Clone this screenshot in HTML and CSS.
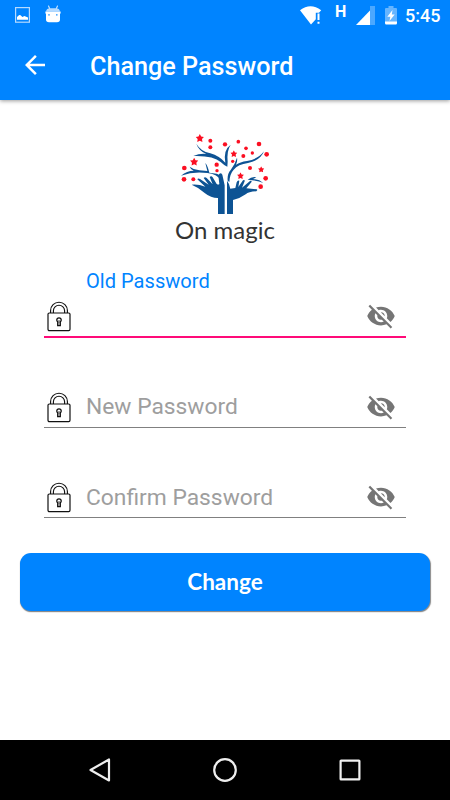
FILE: index.html
```html
<!DOCTYPE html>
<html lang="en">
<head>
  <meta charset="UTF-8" />
  <meta name="viewport" content="width=device-width, initial-scale=1" />
  <title>Change Password</title>
  <link rel="stylesheet" href="styles.css">
</head>
<body>
  <!-- Icons used more than once -->
  <svg class="sprite" aria-hidden="true">
    <symbol id="lock" viewBox="0 0 24 31">
      <path d="M3.6 12V9.6a8.4 8.4 0 0 1 16.8 0V12M6.4 12V9.8a5.6 5.6 0 0 1 11.2 0V12" stroke-width="1.15" />
      <rect x="1" y="12" width="22" height="17.6" rx="1.3" stroke-width="1.2" />
      <path d="M10.7 20.8a2.2 2.2 0 1 1 2.6 0v3.7h-2.6z" stroke-width="1.3" />
      <path d="M12 19v3.5" stroke-width=".8" />
    </symbol>
    <symbol id="eye-off" viewBox="0 0 24 24">
      <path d="M12 7c2.76 0 5 2.24 5 5 0 .65-.13 1.26-.36 1.83l2.92 2.92c1.51-1.26 2.7-2.89 3.43-4.75-1.73-4.39-6-7.5-11-7.5-1.4 0-2.74.25-3.98.7l2.16 2.16C10.74 7.13 11.35 7 12 7zM2 4.27l2.28 2.28.46.46C3.08 8.3 1.78 10.02 1 12c1.73 4.39 6 7.5 11 7.5 1.55 0 3.03-.3 4.38-.84l.42.42L19.73 22 21 20.73 3.27 3 2 4.27zM7.53 9.8l1.55 1.55c-.05.21-.08.43-.08.65 0 1.66 1.34 3 3 3 .22 0 .44-.03.65-.08l1.55 1.55c-.67.33-1.41.53-2.2.53-2.76 0-5-2.24-5-5 0-.79.2-1.53.53-2.2zm4.31-.78l3.15 3.15.02-.16c0-1.66-1.34-3-3-3l-.17.01z" />
    </symbol>
    <symbol id="star" viewBox="-10 -10 20 20">
      <path d="M0-10 3.2-4 9.8-3 5.2 2 6.2 9 0 6-6.2 9-5.2 2-9.8-3-3.2-4z" />
    </symbol>
  </svg>

  <header>
    <div class="status-bar">
      <svg class="icon-image" width="15" height="16" viewBox="0 0 15 16">
        <rect x=".6" y=".6" width="13.8" height="14.6" fill="none" stroke="#b5daff" stroke-width="1.2" />
        <path d="M2 12.8V10l2.2-2 1.4.3 1.8 1.6 2-1 3.6 1.6v2.3z" fill="#fff" />
      </svg>
      <svg class="icon-robot" width="16" height="18" viewBox="0 0 16 18">
        <path d="M3.4.6 4.8 4M12.6.6 11.2 4" stroke="#d7ebff" stroke-width="1.1" />
        <path d="M1 6.5Q1.6 3.2 5 3.2h6q3.4 0 4 3.3z" fill="#b5daff" />
        <path d="M.4 6.5h15.2v1.8L15 9v5.5q0 2.700-3 2.700H4q-3 0-3-2.700V9l-.6-.7z" fill="#fff" />
        <path d="M3.300 9.200h1.400v1.400H3.300zM11.100 9.200h1.400v1.400h-1.400z" fill="#0084ff" />
      </svg>
      <svg class="icon-wifi" width="22" height="19" viewBox="0 0 22 19">
        <path d="M0 4.200Q10.500-3.800 21.200 4.200L19 6.800h-3.200v6.400L11 18.400z" fill="#fff" />
        <path d="M17.500 7.500h2v6.500h-2zM17.500 15.800h2v2h-2z" fill="#fff" />
      </svg>
      <span class="network">H</span>
      <svg class="icon-signal" width="19" height="19" viewBox="0 0 19 19">
        <path d="M14 0h5v19h-5z" fill="#4ba8ff" />
        <path d="M0 19 14 4.500V19z" fill="#fff" />
      </svg>
      <svg class="icon-battery" width="12" height="19" viewBox="0 0 12 19">
        <path d="M0 3q0-1 1-1h2.500V0h5v2H11q1 0 1 1v13H0z" fill="#66b5ff" />
        <path d="M0 15.500h12V17q0 1.500-1.200 1.500H1.200Q0 18.500 0 17zM7.500 4 2.300 10.800h3L4.500 15l5.200-6.500H6.800z" fill="#fff" />
      </svg>
      <span class="clock">5:45</span>
    </div>
    <div class="toolbar">
      <svg class="back" width="30" height="30" viewBox="0 0 24 24">
        <path d="M20 11H7.830l5.590-5.590L12 4l-8 8 8 8 1.410-1.410L7.830 13H20v-2z" fill="#fff" />
      </svg>
      <h1>Change Password</h1>
    </div>
  </header>

  <main>
    <div class="logo">
      <svg width="96" height="85" viewBox="0 0 288 255">
        <g fill="#0d5394">
          <!-- branches -->
          <path d="M55 41Q68 64 97 70Q124 78 142 98Q135 60 158 44Q146 62 149 95L148 110Q139 107 128 96Q106 76 46 78Q65 70 85 72Q62 62 55 41z" />
          <path d="M149 152Q147 132 158 120Q171 103 177 83Q179 94 174 104Q186 96 207 93Q240 88 258 64Q247 92 210 99Q180 103 167 119Q155 132 154 156z" />
          <path d="M9 137Q27 122 47 122Q38 119 35 110Q48 120 64 121L88 123L82 99Q89 107 94 128L116 131Q128 134 130 151Q116 132 88 129Q47 123 9 137z" />
          <path d="M209 149Q222 139 235 142L225 147Q245 149 256 159Q238 151 209 149z" />
          <!-- left hand and trunk -->
          <path d="M41 164Q61 162 82 170L58 148Q60 143 66 147L92 164 77 144Q81 139 86 144L104 163 95 141Q100 136 104 142L116 162Q122 165 124 162L121 136Q127 125 133 134L140 166V252H120V204Q98 204 81 190Q64 173 41 164z" />
          <!-- right hand and trunk -->
          <path d="M147 152Q154 160 157 176L172 174 176 157Q179 149 184 152L181 171 195 151Q201 148 200 154L192 173 216 153Q223 151 220 157L205 175 236 178Q240 180 235 184Q212 185 203 193Q187 205 165 210V252H147z" />
        </g>
        <g fill="#fb0f22">
          <use href="#star" x="53" y="12" width="25" height="25" />
          <use href="#star" x="36" y="83" width="25" height="25" />
          <use href="#star" x="157" y="61" width="21" height="21" />
          <use href="#star" x="177" y="127" width="21" height="21" />
          <use href="#star" x="240" y="109" width="19" height="19" />
          <circle cx="97" cy="32" r="6" />
          <circle cx="97" cy="52" r="6" />
          <circle cx="141" cy="43" r="6.500" />
          <circle cx="181" cy="35" r="5.500" />
          <circle cx="204" cy="55" r="5.500" />
          <circle cx="243" cy="42" r="7" />
          <circle cx="266" cy="73" r="7" />
          <circle cx="223" cy="69" r="5" />
          <circle cx="196" cy="78" r="6" />
          <circle cx="164" cy="94" r="5" />
          <circle cx="116" cy="104" r="6.500" />
          <circle cx="117" cy="122" r="5" />
          <circle cx="19" cy="114" r="7" />
          <circle cx="18" cy="148" r="7" />
          <circle cx="46" cy="148" r="6" />
          <circle cx="216" cy="114" r="6" />
          <circle cx="263" cy="145" r="7" />
          <circle cx="248" cy="170" r="7" />
        </g>
      </svg>
      <p>On magic</p>
    </div>

    <form>
      <label class="caption" for="old">Old Password</label>
      <div class="field active">
        <svg class="lock"><use href="#lock" /></svg>
        <input id="old" type="password">
        <svg class="eye"><use href="#eye-off" /></svg>
      </div>
      <div class="field">
        <svg class="lock"><use href="#lock" /></svg>
        <input type="password" placeholder="New Password">
        <svg class="eye"><use href="#eye-off" /></svg>
      </div>
      <div class="field">
        <svg class="lock"><use href="#lock" /></svg>
        <input type="password" placeholder="Confirm Password">
        <svg class="eye"><use href="#eye-off" /></svg>
      </div>
      <button type="button">Change</button>
    </form>
  </main>

  <!-- Android navigation keys -->
  <nav>
    <svg width="24" height="26" viewBox="0 0 24 26"><path d="M21 2.500v21L2.500 13z" /></svg>
    <svg width="26" height="26" viewBox="0 0 26 26"><circle cx="13" cy="13" r="10.800" /></svg>
    <svg width="22" height="22" viewBox="0 0 22 22"><rect x="1.600" y="1.600" width="18.800" height="18.800" rx=".5" /></svg>
  </nav>
</body>
</html>
```
FILE: styles.css
```css
/* Reset */
* {
  margin: 0;
  padding: 0;
  box-sizing: border-box;
}
body {
  height: 100vh;
  display: flex;
  flex-direction: column;
  overflow: hidden;
  background: #fff;
  font-family: Roboto, "Liberation Sans", sans-serif;
}
svg {
  display: block;
  flex: none;
}
.sprite {
  position: absolute;
  width: 0;
  height: 0;
}
/* Header */
header {
  height: 100px;
  background: #0084ff;
  color: #fff;
  box-shadow: 0 1px 4px rgba(0, 0, 0, 0.4);
}
.status-bar {
  display: flex;
  align-items: flex-start;
  height: 30px;
  padding: 5px 10px 0 15px;
}
.icon-image {
  margin-top: 2px;
}
.icon-robot {
  margin-left: 15px;
}
.icon-wifi {
  margin: 1px 0 0 auto;
}
.network {
  margin: -3px 0 0 13px;
  width: 11px;
  font-size: 16px;
  line-height: 19px;
  font-weight: 700;
}
.icon-signal {
  margin: 1px 0 0 10px;
}
.icon-battery {
  margin: 1px 0 0 10px;
}
.clock {
  width: 35px;
  margin-left: 8px;
  font-size: 18px;
  line-height: 22px;
  font-weight: 500;
  white-space: nowrap;
}
.toolbar {
  display: flex;
  align-items: center;
  height: 70px;
  padding-left: 20px;
}
h1 {
  margin: 2px 0 0 40px;
  font-size: 25.2px;
  font-weight: 500;
}
/* Logo */
main {
  flex: 1;
}
.logo {
  display: flex;
  flex-direction: column;
  align-items: center;
  height: 170px;
  padding-top: 30px;
}
.logo svg {
  margin-left: 2px;
}
.logo p {
  font-family: Lato, sans-serif;
  font-size: 24px;
  line-height: 30px;
  color: #333;
}
/* Form */
form {
  display: flex;
  flex-direction: column;
  padding: 0 19px;
}
.caption {
  margin-left: 67px;
  font-size: 20.1px;
  line-height: 22px;
  color: #0084ff;
}
.field {
  display: flex;
  align-items: flex-start;
  height: 37px;
  margin: 0 25px 53px;
  padding-left: 3px;
  border-bottom: 1px solid #808080;
}
.field.active {
  height: 46px;
  padding-top: 8px;
  border-bottom: 2px solid #ff0a78;
}
.lock {
  width: 24px;
  height: 31px;
  margin-top: 1px;
  fill: none;
  stroke: #111;
}
.field input {
  flex: 1;
  min-width: 0;
  height: 31px;
  margin: 0 0 0 15px;
  border: none;
  outline: none;
  background: none;
  font-family: inherit;
  font-size: 22.8px;
}
.field input::placeholder {
  color: #9e9e9e;
}
.field:nth-of-type(3) input {
  margin-top: 1px;
}
.eye {
  width: 30px;
  height: 30px;
  margin: 1px 10px 0 0;
  fill: #757575;
}
button {
  height: 58px;
  margin: -18px 1px 0;
  padding-bottom: 2px;
  border: none;
  border-radius: 11px;
  background: #0084ff;
  box-shadow: 0 1px 1px #8a8a8a, 1px 1px 1px #8a8a8a;
  color: #fff;
  font-family: Lato, sans-serif;
  font-size: 22.5px;
  font-weight: 700;
}
/* Bottom keys */
nav {
  display: flex;
  align-items: center;
  justify-content: space-between;
  height: 60px;
  padding: 0 89px 0 88px;
  background: #000;
}
nav svg {
  fill: none;
  stroke: #eee;
  stroke-width: 2.2;
  stroke-linejoin: round;
}
nav svg:nth-child(2) {
  margin-right: 2px;
}
```
